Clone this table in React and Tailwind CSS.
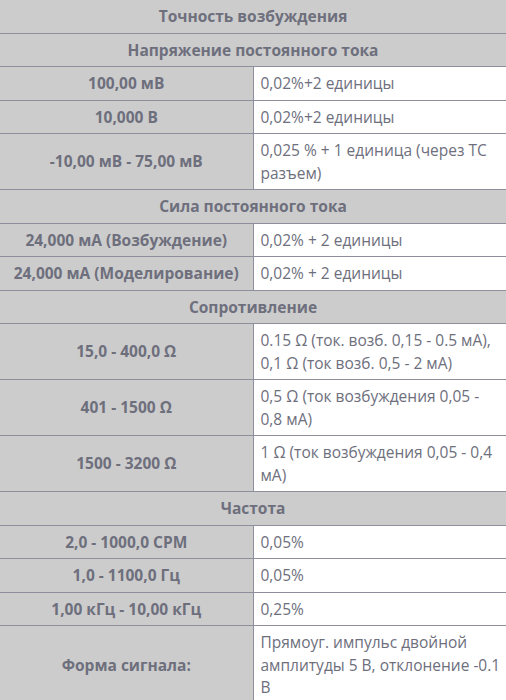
const rows = [
  { head: 'Точность возбуждения' },
  { head: 'Напряжение постоянного тока' },
  { k: '100,00 мВ', v: '0,02%+2 единицы' },
  { k: '10,000 В', v: '0,02%+2 единицы' },
  { k: '-10,00 мВ - 75,00 мВ', v: '0,025 % + 1 единица (через ТС разъем)' },
  { head: 'Сила постоянного тока' },
  { k: '24,000 мА (Возбуждение)', v: '0,02% + 2 единицы' },
  { k: '24,000 мА (Моделирование)', v: '0,02% + 2 единицы' },
  { head: 'Сопротивление' },
  { k: '15,0 - 400,0 Ω', v: '0.15 Ω (ток. возб. 0,15 - 0.5 мА), 0,1 Ω (ток возб. 0,5 - 2 мА)' },
  { k: '401 - 1500 Ω', v: '0,5 Ω (ток возбуждения 0,05 - 0,8 мА)' },
  { k: '1500 - 3200 Ω', v: '1 Ω (ток возбуждения 0,05 - 0,4 мА)' },
  { head: 'Частота' },
  { k: '2,0 - 1000,0 CPM', v: '0,05%' },
  { k: '1,0 - 1100,0 Гц', v: '0,05%' },
  { k: '1,00 кГц - 10,00 кГц', v: '0,25%' },
  { k: 'Форма сигнала:', v: 'Прямоуг. импульс двойной амплитуды 5 В, отклонение -0.1 В' },
];

export default function App() {
  return (
    <div className="w-[506px] bg-white font-['Open_Sans',sans-serif] text-[15.5px] leading-[22.5px] text-[#6e6f7d]">
      <table className="w-full table-fixed border-collapse">
        <colgroup>
          <col className="w-[253px]" />
          <col />
        </colgroup>
        <tbody>
          {rows.map((r, i) =>
            r.head ? (
              <tr key={i}>
                <td
                  colSpan={2}
                  className={`bg-[#cccccc] text-center font-bold py-[5px] border-b border-[#8e8f9c] ${i === 0 ? '' : 'border-t'}`}
                >
                  {r.head}
                </td>
              </tr>
            ) : (
              <tr key={i}>
                <td className="bg-[#cccccc] text-center font-bold py-[5px] px-1 border border-l-0 border-[#8e8f9c]">
                  {r.k}
                </td>
                <td className="bg-white py-[5px] pl-[7px] pr-[4px] border border-r-0 border-[#8e8f9c]">
                  {r.v}
                </td>
              </tr>
            )
          )}
        </tbody>
      </table>
    </div>
  );
}
